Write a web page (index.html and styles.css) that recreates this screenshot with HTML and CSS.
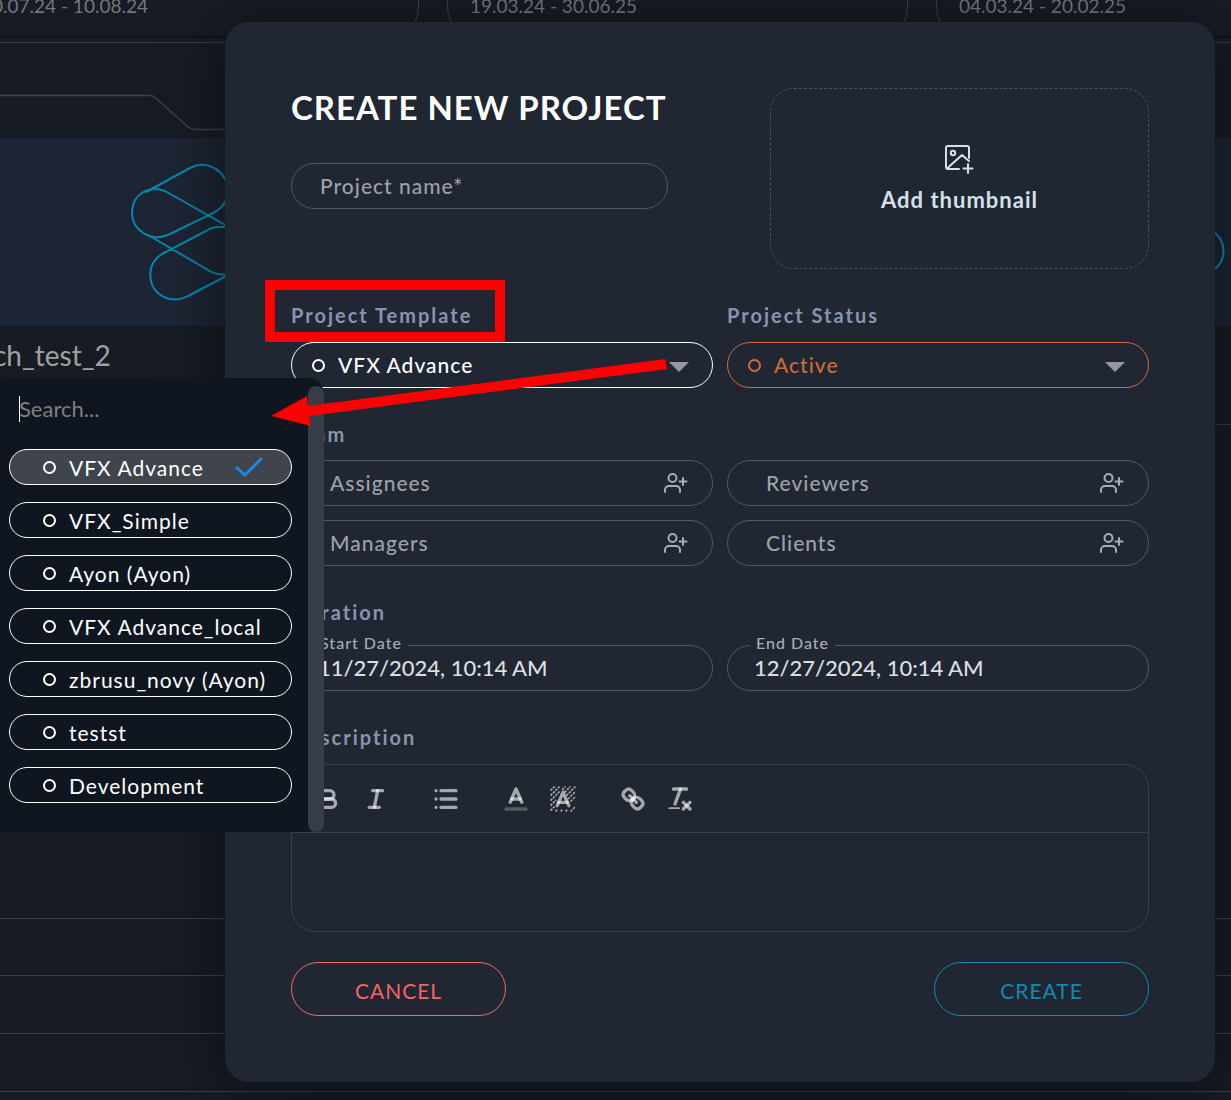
FILE: index.html
```html
<!DOCTYPE html>
<html lang="en">
<head>
    <meta charset="UTF-8">
    <meta name="viewport" content="width=device-width, initial-scale=1.0">
    <title>Create new project</title>
    <link rel="stylesheet" href="styles.css">
</head>
<body>
    <svg class="defs" aria-hidden="true">
        <symbol id="user-plus" viewBox="0 0 24 24">
            <circle cx="8.5" cy="7" r="4"/>
            <path d="M1 21v-2a4 4 0 0 1 4-4h7a4 4 0 0 1 4 4v2M19 7v7M15.500 10.500h7"/>
        </symbol>
    </svg>

    <div class="stage">
        <div class="projects">
            <div class="timeline">
                <div class="period">30.07.24 - 10.08.24</div>
                <div class="period">19.03.24 - 30.06.25</div>
                <div class="period">04.03.24 - 20.02.25</div>
            </div>
            <div class="tabs">
                <svg width="226" height="40" viewBox="0 0 226 40"><path d="M0 2.500H150q3 0 5 2L187 33q4 3.500 8 3.500H226"/></svg>
            </div>
            <div class="thumbs">
                <svg class="logo" width="130" height="188" viewBox="120 138 130 188">
                    <path d="M146 192L190 168C203 161 219 166 226 181C232 195 225 207 213 213L168 235C150 242 132 230 132 213C132 193 150 185 165 191L250 239"/>
                    <path d="M148 235L208 270Q215 275 226 274.500M250 227H219Q212 227 206 231L162 254C146 264 148 284 158 293C167 301 179 301 188 296L232 273"/>
                </svg>
                <svg class="logo" width="31" height="188" viewBox="1200 138 31 188"><circle cx="1200" cy="251" r="23.500"/></svg>
            </div>
            <div class="project-name">ch_test_2</div>
            <div class="rows">
                <div class="row"></div>
                <div class="row"></div>
                <div class="row"></div>
            </div>
        </div>

        <form class="modal">
            <div class="top">
                <div class="top-left">
                    <h1>CREATE NEW PROJECT</h1>
                    <input class="field name" type="text" placeholder="Project name*" aria-label="Project name">
                </div>
                <button type="button" class="thumbnail">
                    <svg width="32" height="32" viewBox="0 0 32 32">
                        <path d="M25 15V5a2 2 0 0 0-2-2H4a2 2 0 0 0-2 2V24a2 2 0 0 0 2 2H15M3 25.500L18 12l7 6M24 21v9M19.500 25.500h9"/>
                        <circle cx="9" cy="10" r="2.200"/>
                    </svg>
                    Add thumbnail
                </button>
            </div>

            <div class="columns">
                <div class="group marked">
                    <label class="label" for="template">Project Template</label>
                    <div class="select template">
                        <span class="dot"></span>
                        <select id="template"><option>VFX Advance</option></select>
                        <svg class="caret" width="20" height="10"><path d="M0 0H20L10 10Z"/></svg>
                    </div>
                </div>
                <div class="group">
                    <label class="label" for="status">Project Status</label>
                    <div class="select status">
                        <span class="dot"></span>
                        <select id="status"><option>Active</option></select>
                        <svg class="caret" width="20" height="10"><path d="M0 0H20L10 10Z"/></svg>
                    </div>
                </div>
            </div>

            <div class="group">
                <div class="label">Team</div>
                <div class="columns team">
                    <div class="person"><input class="field" type="text" placeholder="Assignees" aria-label="Assignees"><svg class="icon"><use href="#user-plus"/></svg></div>
                    <div class="person"><input class="field" type="text" placeholder="Reviewers" aria-label="Reviewers"><svg class="icon"><use href="#user-plus"/></svg></div>
                    <div class="person"><input class="field" type="text" placeholder="Managers" aria-label="Managers"><svg class="icon"><use href="#user-plus"/></svg></div>
                    <div class="person"><input class="field" type="text" placeholder="Clients" aria-label="Clients"><svg class="icon"><use href="#user-plus"/></svg></div>
                </div>
            </div>

            <div class="group">
                <div class="label">Duration</div>
                <div class="columns dates">
                    <div class="date">
                        <label for="start">Start Date</label>
                        <input class="field" id="start" type="text" value="11/27/2024, 10:14 AM">
                    </div>
                    <div class="date">
                        <label for="end">End Date</label>
                        <input class="field" id="end" type="text" value="12/27/2024, 10:14 AM">
                    </div>
                </div>
            </div>

            <div class="group">
                <label class="label" for="description">Description</label>
                <div class="editor">
                    <div class="toolbar">
                        <div class="tools">
                            <button type="button" aria-label="Bold"><svg viewBox="0 0 18 18"><path d="M5 4H9.500a2.500 2.500 0 0 1 0 5H5Z"/><path d="M5 9h5.500a2.500 2.500 0 0 1 0 5H5Z"/></svg></button>
                            <button type="button" aria-label="Italic"><svg viewBox="0 0 18 18"><path d="M7 4H13"/><path d="M5 14H11"/><path d="M8 14L10 4"/></svg></button>
                        </div>
                        <div class="tools">
                            <button type="button" aria-label="List"><svg viewBox="0 0 18 18"><path d="M6 4H15M6 9H15M6 14H15M3 4h0M3 9h0M3 14h0"/></svg></button>
                        </div>
                        <div class="tools">
                            <button type="button" aria-label="Text color"><svg viewBox="0 0 18 18"><path class="faint" d="M3 15H15"/><path d="M5.500 11L9 3L12.500 11"/><path d="M11.600 9H6.400"/></svg></button>
                            <button type="button" aria-label="Highlight"><svg viewBox="0 0 18 18"><path class="hatch" d="M1.500 4L4 1.500M1.500 7L7 1.500M1.500 10L7 4.500M1.500 13L5 9.500M1.500 16L4 13.500M4.500 16.500L6 15M7.500 16.500L9 15M10.500 16.500L12 15M13.500 16.500L16.500 13.500M13.500 10.500L16.500 7.500M12 9L16.500 4.500M11 7L16.500 1.500M10 5L13.500 1.500M8.500 3.500L10.500 1.500"/><path d="M5.500 13L9 5L12.500 13"/><path d="M11.600 11H6.400"/></svg></button>
                        </div>
                        <div class="tools">
                            <button type="button" aria-label="Link"><svg viewBox="0 0 18 18"><path d="M7 7L11 11"/><path d="M8.900 4.577a3.476 3.476 0 0 1 .36 4.679A3.476 3.476 0 0 1 4.577 8.900C3.185 7.500 2.035 6.400 4.217 4.217S7.500 3.185 8.900 4.577Z"/><path d="M13.423 9.100a3.476 3.476 0 0 0-4.679-.36 3.476 3.476 0 0 0 .36 4.679c1.392 1.392 2.500 2.542 4.679.36S14.815 10.500 13.423 9.100Z"/></svg></button>
                            <button type="button" aria-label="Clear formatting"><svg viewBox="0 0 18 18"><path d="M5 3H13"/><path d="M6 12L9.350 3"/><path d="M11 11L15 15"/><path d="M15 11L11 15"/><path class="thin" d="M2.500 14.500H8.500"/></svg></button>
                        </div>
                    </div>
                    <textarea id="description"></textarea>
                </div>
            </div>

            <div class="actions">
                <button type="button" class="cancel">CANCEL</button>
                <button type="submit" class="create">CREATE</button>
            </div>
        </form>
    </div>

    <div class="menu">
        <input class="search" type="text" placeholder="Search..." aria-label="Search">
        <ul>
            <li><button type="button" class="active"><span class="dot"></span>VFX Advance<svg class="check" width="28" height="22" viewBox="0 0 28 22"><path d="M1 11L10 19L27 2"/></svg></button></li>
            <li><button type="button"><span class="dot"></span>VFX_Simple</button></li>
            <li><button type="button"><span class="dot"></span>Ayon (Ayon)</button></li>
            <li><button type="button"><span class="dot"></span>VFX Advance_local</button></li>
            <li><button type="button"><span class="dot"></span>zbrusu_novy (Ayon)</button></li>
            <li><button type="button"><span class="dot"></span>testst</button></li>
            <li><button type="button"><span class="dot"></span>Development</button></li>
        </ul>
        <div class="scrollbar"></div>
    </div>

    <svg class="arrow" width="396" height="68" viewBox="271 358 396 68"><path d="M271 416L307 396L308 406L665 359L667 369L309 416L311 426Z"/></svg>
</body>
</html>
```

FILE: styles.css
```css
* { box-sizing: border-box; }
body { position: relative; margin: 0; min-height: 100vh; overflow: hidden; background-color: #171b24; color: #fff; font-family: Lato, sans-serif; font-size: 21px; }
h1, ul { margin: 0; padding: 0; }
button, input, select, textarea { font: inherit; letter-spacing: inherit; color: inherit; background: none; border: none; outline: none; padding: 0; }
button { cursor: pointer; }
svg { flex: none; fill: none; stroke-linecap: round; stroke-linejoin: round; }
.defs { position: absolute; width: 0; height: 0; }

/* page and modal share one cell, the modal lies on top */
.stage { display: grid; min-height: 100vh; overflow: hidden; }
.projects, .modal { grid-area: 1 / 1; min-width: 0; }

.projects { display: flex; flex-direction: column; overflow: hidden; color: #a0a0a0; }
.timeline { display: flex; gap: 28px; height: 38px; margin-left: -42px; overflow: hidden; border-bottom: 2px solid #10131a; }
.period { flex: none; width: 461px; height: 46px; padding-left: 22px; border: 1px solid #3c424e; border-top: none; border-radius: 0 0 40px 40px; font-size: 19px; line-height: 12px; color: #75777b; }
.tabs { height: 96px; margin-top: 4px; padding-top: 50px; border-top: 1px solid #343944; }
.tabs svg { display: block; stroke: #3c414d; stroke-width: 1.500; }
.thumbs { display: flex; justify-content: space-between; height: 188px; padding-left: 120px; background-color: #1d2433; }
.logo { stroke: #0489ae; stroke-width: 2; }
.project-name { height: 99px; margin-left: -7px; padding-top: 11px; border-bottom: 1px solid #343944; font-size: 28px; line-height: 36px; }
.rows { padding-top: 493px; border-bottom: 1px solid #3a3f49; }
.row { height: 58px; border-top: 1px solid #3a3f49; }
.row:first-child { height: 57px; }

.modal { align-self: start; margin: 22px 16px 18px 225px; padding: 66px; border-radius: 24px; background-color: #202733; box-shadow: 0 8px 60px rgba(0, 0, 0, 0.5); font-weight: 500; letter-spacing: 1px; }
.top { display: flex; justify-content: space-between; }
.top-left { width: 377px; }
h1 { font-size: 33px; line-height: 38px; white-space: nowrap; }
.field { display: block; width: 100%; height: 46px; padding-bottom: 2px; border: 1px solid #4f5965; border-radius: 23px; }
.name { margin-top: 37px; padding: 0 28px 2px; }
.field::placeholder { color: #9ea1a7; opacity: 1; }
.thumbnail { display: flex; flex-direction: column; align-items: center; justify-content: center; gap: 12px; width: 379px; height: 181px; padding-bottom: 2px; border: 1px dashed #46535e; border-radius: 24px; color: #d5e0e9; font-size: 22px; font-weight: bold; line-height: 26px; }
.thumbnail svg { stroke: #d5e0e9; stroke-width: 2; }

.columns { display: grid; grid-template-columns: 1fr 1fr; gap: 14px; }
.group { margin-top: 33px; }
.label { display: block; margin-bottom: 14px; color: #8a93b0; font-size: 20px; font-weight: bold; line-height: 26px; letter-spacing: 2px; }
.marked { position: relative; }
.marked::before { content: ""; position: absolute; left: -26px; top: -22px; box-sizing: border-box; width: 240px; height: 62px; border: 10px solid #f00; }

.dot { flex: none; width: 13px; height: 13px; border: 2px solid; border-radius: 50%; }
.select { display: flex; align-items: center; gap: 13px; height: 46px; padding: 0 23px 0 20px; border: 1px solid #fff; border-radius: 23px; }
.select select { flex: 1; padding-bottom: 2px; appearance: none; }
.status { border-color: #d26b38; color: #d26b38; }
.caret { margin-top: 3px; fill: #9297a0; }

.team { margin-top: -1px; }
.person { position: relative; }
.person .field { padding: 0 60px 2px 38px; }
.icon { position: absolute; right: 25px; top: 11px; width: 24px; height: 24px; stroke: #a5aeb8; stroke-width: 2; }
.dates { padding-top: 6px; }
.date { position: relative; }
.date label { position: absolute; left: 23px; top: -12px; padding: 0 6px; background-color: #202733; color: #a9adb3; font-size: 16px; line-height: 20px; }
.date .field { padding: 0 26px 2px; color: #dcdee0; font-size: 22px; letter-spacing: 0; }

.editor { border: 1px solid #3a414e; border-radius: 24px; }
.toolbar { display: flex; gap: 23px; height: 68px; padding: 0 13px; border-bottom: 1px solid #3a414e; }
.tools { display: flex; }
.tools button { display: flex; align-items: center; justify-content: center; width: 47px; }
.tools svg { width: 30px; height: 30px; stroke: rgba(255, 255, 255, 0.6); stroke-width: 2; }
.tools .faint { opacity: 0.4; }
.tools .thin { stroke-width: 1; }
.tools .hatch { stroke-width: 1; stroke-dasharray: 1.500 0.600; stroke-linecap: butt; }
textarea { display: block; width: 100%; height: 98px; padding: 12px 20px; resize: none; }

.actions { display: flex; justify-content: space-between; margin-top: 30px; }
.actions button { width: 215px; height: 54px; padding-top: 2px; border: 1px solid; border-radius: 27px; font-weight: normal; }
.cancel { color: #f26666; }
.create { color: #0f8bb0; }

.menu { position: absolute; left: -8px; top: 378px; width: 332px; height: 454px; padding: 8px 32px 0 17px; border-radius: 16px; background-color: #10161f; letter-spacing: 1px; }
.search { display: block; width: 100%; height: 46px; padding: 0 0 2px 10px; background: linear-gradient(#fff, #fff) 10px 10px / 1px 26px no-repeat; font-size: 22px; letter-spacing: 0; }
.search::placeholder { color: #7f7f7f; opacity: 1; }
.menu ul { display: flex; flex-direction: column; gap: 17px; margin-top: 17px; list-style: none; }
.menu li button { display: flex; align-items: center; gap: 13px; width: 100%; height: 36px; padding-left: 33px; border: 1px solid #fff; border-radius: 18px; }
.menu .active { background-color: #40454d; }
.check { margin: 0 28px 0 auto; stroke: #1e88e5; stroke-width: 3; stroke-linecap: butt; stroke-linejoin: miter; }
.scrollbar { position: absolute; right: 0; top: 8px; bottom: 0; width: 16px; border-radius: 8px; background-color: #373c49; }
.arrow { position: absolute; left: 271px; top: 358px; fill: #f00; }
```
